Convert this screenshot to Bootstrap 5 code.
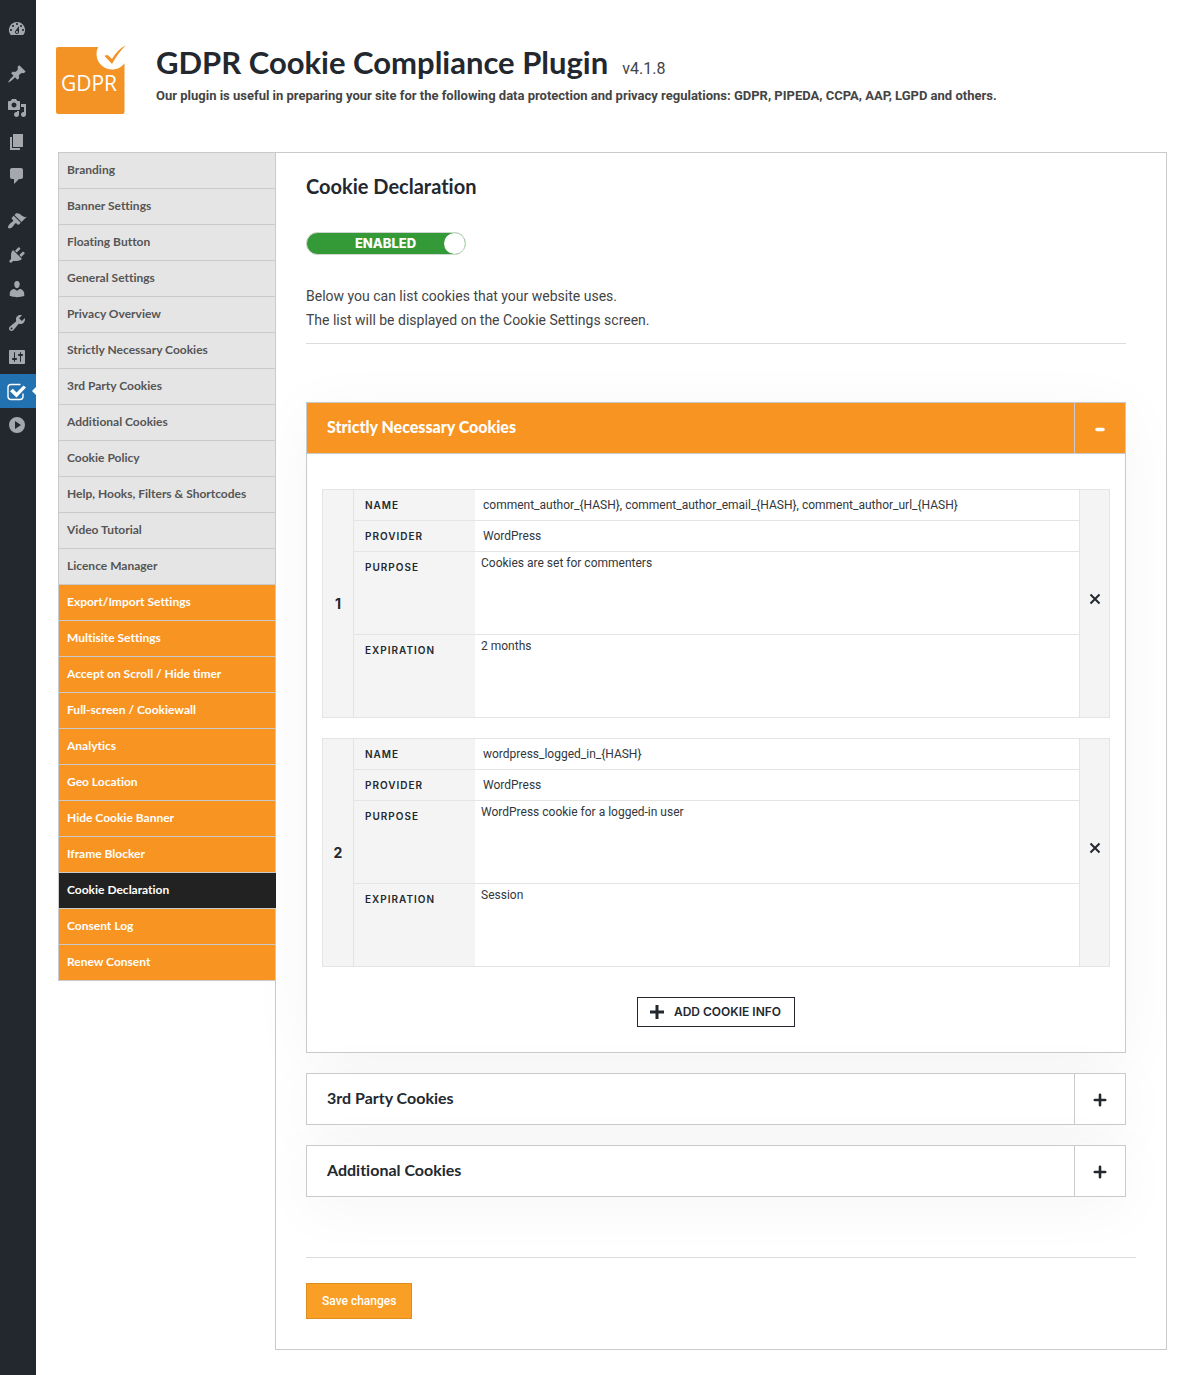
<!DOCTYPE html>
<html lang="en">
<head>
<meta charset="utf-8">
<meta name="viewport" content="width=device-width, initial-scale=1">
<title>GDPR Cookie Compliance Plugin</title>
<link rel="stylesheet" href="https://cdn.jsdelivr.net/npm/bootstrap@5.3.0/dist/css/bootstrap.min.css">
<style>
:root { --ink: #23282f; --brand: #f89422; --rule: #c9cacc; --soft: #e3e4e4; --tint: #f4f4f4; --title: Lato, "Noto Sans", sans-serif; --text: Roboto, "Liberation Sans", sans-serif; }
body { font: 14px/24px var(--text); color: #444; background: #fff; }
.rail { width: 36px; background: var(--ink); padding-top: 12px; }
.rail a { position: relative; height: 34px; padding-right: 2px; color: #a4a8ad; }
.rail a.gap-above { margin-top: 11px; }
.rail svg { width: 20px; height: 20px; fill: currentColor; }
.rail a.current { background: #2271b1; color: #fff; }
.rail a.current::after { content: ""; position: absolute; right: 0; top: 13px; border: solid transparent; border-width: 4px 4px 4px 0; border-right-color: #fff; }
.page-main { padding: 40px 20px 25px; }
.logo { width: 72px; height: 76px; }
.head-row { gap: 28px; min-height: 112px; }
.head-row h1 { font: 700 31px/45px var(--title); color: var(--ink); }
.version { font-size: 16px; margin-left: 14px; }
.tagline { font: 700 13px/21px var(--text); }
.split { margin-left: 2px; }
.side { width: 218px; margin-right: -1px; z-index: 1; border: 1px solid var(--rule); border-bottom: 0; }
.side a { height: 36px; padding: 0 8px; font: 700 12px/34px var(--title); border-bottom: 1px solid var(--rule); background: #e5e5e5; color: #555; }
.side a.premium { background: var(--brand); color: #fff; }
.side a.active { background: #222; color: #fff; margin-right: -1px; }
.panel { border: 1px solid var(--rule); padding: 20px 30px 30px; }
.panel h2 { font: 700 20px/27px var(--title); color: var(--ink); margin: 0 0 32px; }
.head-row h1, .side a, .panel h2, .panel .group-name { font-variant-ligatures: none; }
.toggle { position: relative; width: 160px; height: 23px; border: 1px solid #cfd6cf; border-radius: 12px; background: #349a37; color: #fff; font: 800 13px/21px Inter, sans-serif; cursor: pointer; }
.toggle input { opacity: 0; position: absolute; inset: 0; width: 100%; height: 100%; margin: 0; }
.toggle .caption-text { padding-left: 20px; }
.toggle .knob { width: 21px; height: 21px; border-radius: 50%; background: #fff; }
.intro { margin: 29px 10px 58px 0; padding-bottom: 11px; border-bottom: 1px solid #dcdcdc; }
.groups { margin-right: 10px; gap: 20px; }
.group-box { border: 1px solid var(--rule); background: #fff; box-shadow: 0 10px 60px rgba(0,0,0,.045); }
.group-head { height: 50px; color: var(--ink); background: none; border: 0; padding: 0; width: 100%; }
.group-name { font: 700 16px/48px var(--title); padding-left: 20px; }
.group-sign { width: 51px; border-left: 1px solid var(--rule); padding-top: 2px; }
.open .group-head { height: 51px; background: var(--brand); color: #fff; border-bottom: 1px solid var(--rule); }
.open .group-name { font-weight: 900; }
.group-body { padding: 35px 15px 25px; }
.entry { border: 1px solid var(--soft); margin-bottom: 20px; color: var(--ink); }
.entry .num { width: 31px; background: var(--tint); border-right: 1px solid var(--soft); font: 700 14px/24px Inter, sans-serif; }
.entry .drop { width: 30px; background: var(--tint); border: 0; border-left: 1px solid var(--soft); color: var(--ink); padding: 0 0 12px; }
.line { border-bottom: 1px solid var(--soft); height: 31px; }
.line.tall { height: 83px; }
.line.tall:last-child { border-bottom: 0; height: 82px; }
.line label { width: 121px; padding-left: 11px; background: var(--tint); font: 600 10px/31px Inter, sans-serif; letter-spacing: 1px; }
.line input, .line textarea { border: 0; outline: 0; background: #fff; color: #32373c; font: 12px/18px var(--text); padding: 0 8px; min-width: 0; resize: none; }
.line textarea { padding: 2px 6px; }
.add { height: 30px; margin-top: 30px; border: 1px solid var(--ink); background: #fff; color: var(--ink); font: 600 12px/28px Inter, sans-serif; padding: 0 13px 0 12px; gap: 10px; }
.final { border-top: 1px solid #dcdcdc; margin-top: 60px; padding-top: 25px; }
.save { height: 36px; padding: 0 15px; border: 1px solid #dd8e20; background: #f99f26; color: #fff; font: 500 12px/34px var(--text); }
</style>
</head>
<body>
<div class="d-flex align-items-stretch min-vh-100">
<nav class="rail flex-shrink-0 d-flex flex-column" aria-label="Admin">
<a href="#" class="d-flex align-items-center justify-content-center" aria-label="Dashboard"><svg viewBox="0 0 20 20"><path fill-rule="evenodd" d="M3.76 16h12.48A7.998 7.998 0 0 0 10 3a7.998 7.998 0 0 0-6.24 13zM10 4c.55 0 1 .45 1 1s-.45 1-1 1-1-.45-1-1 .45-1 1-1zM6 6c.55 0 1 .45 1 1s-.45 1-1 1-1-.45-1-1 .45-1 1-1zm8 0c.55 0 1 .45 1 1s-.45 1-1 1-1-.45-1-1 .45-1 1-1zm-5.37 5.55L12 7v6c0 1.1-.9 2-2 2s-2-.9-2-2c0-.57.24-1.08.63-1.45zM4 10c.55 0 1 .45 1 1s-.45 1-1 1-1-.45-1-1 .45-1 1-1zm12 0c.55 0 1 .45 1 1s-.45 1-1 1-1-.45-1-1 .45-1 1-1zm-5 3c0-.55-.45-1-1-1s-1 .45-1 1 .45 1 1 1 1-.45 1-1z"/></svg></a>
<a href="#" class="gap-above d-flex align-items-center justify-content-center" aria-label="Posts"><svg viewBox="0 0 20 20"><path d="M10.44 3.02l1.82-1.82 6.36 6.35-1.83 1.82c-1.05-.68-2.48-.57-3.41.36l-.75.75c-.92.93-1.04 2.35-.35 3.41l-1.83 1.82-2.41-2.41-2.8 2.79c-.42.42-3.38 2.71-3.8 2.29s1.86-3.39 2.28-3.81l2.79-2.79L4.1 9.36l1.83-1.82c1.05.69 2.48.57 3.4-.36l.75-.75c.93-.92 1.05-2.35.36-3.41z"/></svg></a>
<a href="#" class="d-flex align-items-center justify-content-center" aria-label="Media"><svg viewBox="0 0 20 20"><path fill-rule="evenodd" d="M13 11V4c0-.55-.45-1-1-1h-1.67L9 1H5L3.67 3H2c-.55 0-1 .45-1 1v7c0 .55.45 1 1 1h10c.55 0 1-.45 1-1zM7 4.5c1.38 0 2.5 1.12 2.5 2.5S8.38 9.5 7 9.5 4.5 8.38 4.5 7 5.62 4.5 7 4.5zM14 6h5v10.5c0 1.38-1.12 2.5-2.5 2.5S14 17.88 14 16.5s1.12-2.5 2.5-2.5c.17 0 .34.02.5.05V9h-3V6zm-4 8.05V13h2v3.5c0 1.38-1.12 2.5-2.5 2.5S7 17.88 7 16.5 8.12 14 9.5 14c.17 0 .34.02.5.05z"/></svg></a>
<a href="#" class="d-flex align-items-center justify-content-center" aria-label="Pages"><svg viewBox="0 0 20 20"><path d="M6 15V2h10v13H6zm-1 1h8v2H3V5h2v11z"/></svg></a>
<a href="#" class="d-flex align-items-center justify-content-center" aria-label="Comments"><svg viewBox="0 0 20 20"><path d="M5 2h9c1.1 0 2 .9 2 2v7c0 1.1-.9 2-2 2h-2l-5 5v-5H5c-1.1 0-2-.9-2-2V4c0-1.1.9-2 2-2z"/></svg></a>
<a href="#" class="gap-above d-flex align-items-center justify-content-center" aria-label="Appearance"><svg viewBox="0 0 20 20"><path d="M14.48 11.06L7.41 3.99l1.5-1.5c.5-.56 2.3-.47 3.51.32 1.21.8 1.43 1.28 2.91 2.1 1.18.64 2.45 1.26 4.45.85zm-.71.71L6.7 4.7 4.93 6.47c-.39.39-.39 1.02 0 1.41l1.06 1.06c.39.39.39 1.03 0 1.42-.6.6-1.43 1.11-2.21 1.69-.35.26-.7.53-1.01.84C1.43 14.23.4 16.08 1.4 17.07c.99 1 2.84-.03 4.18-1.36.31-.31.58-.66.85-1.02.57-.78 1.08-1.61 1.69-2.21.39-.39 1.02-.39 1.41 0l1.06 1.06c.39.39 1.02.39 1.41 0z"/></svg></a>
<a href="#" class="d-flex align-items-center justify-content-center" aria-label="Plugins"><svg viewBox="0 0 20 20"><path d="M13.11 4.36L9.87 7.6 8 5.73l3.24-3.24c.35-.34 1.05-.2 1.56.32.52.51.66 1.21.31 1.55zm-8 1.77l.91-1.12 9.01 9.01-1.19.84c-.71.71-2.63 1.16-3.82 1.16H6.14L4.9 17.26c-.59.59-1.54.59-2.12 0-.59-.58-.59-1.53 0-2.12l1.24-1.24v-3.88c0-1.13.4-3.19 1.09-3.89zm7.26 3.97l3.24-3.24c.34-.35 1.04-.21 1.55.31.52.51.66 1.21.31 1.55l-3.24 3.25z"/></svg></a>
<a href="#" class="d-flex align-items-center justify-content-center" aria-label="Users"><svg viewBox="0 0 20 20"><path d="M10 9.25c-2.27 0-2.73-3.44-2.73-3.44C7 4.02 7.82 2 9.97 2c2.16 0 2.98 2.02 2.71 3.81 0 0-.41 3.44-2.68 3.44zm0 2.57L12.72 10c2.39 0 4.52 2.33 4.52 4.53v2.49s-3.65 1.13-7.24 1.13c-3.65 0-7.24-1.13-7.24-1.13v-2.49c0-2.25 1.94-4.48 4.47-4.48z"/></svg></a>
<a href="#" class="d-flex align-items-center justify-content-center" aria-label="Tools"><svg viewBox="0 0 20 20"><path fill-rule="evenodd" d="M16.68 9.77c-1.34 1.34-3.3 1.67-4.95.99l-5.41 6.52c-.99.99-2.59.99-3.58 0s-.99-2.59 0-3.57l6.52-5.42c-.68-1.65-.35-3.61.99-4.95 1.28-1.28 3.12-1.62 4.72-1.06l-2.89 2.89 2.82 2.82 2.86-2.87c.53 1.58.18 3.39-1.08 4.65zM3.81 16.21c.4.39 1.04.39 1.43 0 .4-.4.4-1.04 0-1.43-.39-.4-1.03-.4-1.43 0-.39.39-.39 1.03 0 1.43z"/></svg></a>
<a href="#" class="d-flex align-items-center justify-content-center" aria-label="Settings"><svg viewBox="0 0 20 20"><path fill-rule="evenodd" d="M18 16V4c0-.55-.45-1-1-1H3c-.55 0-1 .45-1 1v12c0 .55.45 1 1 1h14c.55 0 1-.45 1-1zM8 11h1c.55 0 1 .45 1 1s-.45 1-1 1H8v1.5c0 .28-.22.5-.5.5s-.5-.22-.5-.5V13H6c-.55 0-1-.45-1-1s.45-1 1-1h1V5.5c0-.28.22-.5.5-.5s.5.22.5.5V11zm5-2h-1c-.55 0-1-.45-1-1s.45-1 1-1h1V5.5c0-.28.22-.5.5-.5s.5.22.5.5V7h1c.55 0 1 .45 1 1s-.45 1-1 1h-1v5.5c0 .28-.22.5-.5.5s-.5-.22-.5-.5V9z"/></svg></a>
<a href="#" class="current d-flex align-items-center justify-content-center" aria-label="GDPR Cookie"><svg viewBox="0 0 20 20"><path d="M13.500 3.500H4Q1 3.500 1 6.500v9q0 3 3 3h9q3 0 3-3v-3" fill="none" stroke="currentColor" stroke-width="1.400"/><path d="M3 10.200l2.800-2.400 3.700 3.700 7-7 2.500 2L9.500 16.500z"/></svg></a>
<a href="#" class="d-flex align-items-center justify-content-center" aria-label="Collapse menu"><svg viewBox="0 0 20 20"><path fill-rule="evenodd" d="M10 2a8 8 0 1 0 0 16 8 8 0 0 0 0-16zM8 6l6 4-6 4z"/></svg></a>
</nav>
<main class="page-main flex-grow-1">
<header class="head-row d-flex align-items-start">
<svg class="logo flex-shrink-0" viewBox="0 0 72 76" role="img" aria-label="GDPR logo">
<path fill="#f39325" d="M2 7H42.200A15.500 15.500 0 0 0 68.500 23.200V72a2 2 0 0 1-2 2H2a2 2 0 0 1-2-2V9a2 2 0 0 1 2-2z"/>
<path fill="#f39325" d="M48.300 15.700L51.800 15 56 19Q61 10 70 5 62 13 56 24z"/>
<text x="33" y="51" text-anchor="middle" font-family="Open Sans" font-size="21" fill="#fff">GDPR</text>
</svg>
<div>
<div class="d-flex align-items-baseline"><h1 class="m-0">GDPR Cookie Compliance Plugin</h1><span class="version">v4.1.8</span></div>
<p class="tagline m-0">Our plugin is useful in preparing your site for the following data protection and privacy regulations: GDPR, PIPEDA, CCPA, AAP, LGPD and others.</p>
</div>
</header>
<div class="split d-flex align-items-start">
<nav class="side nav flex-column flex-nowrap flex-shrink-0" aria-label="Plugin settings">
<a href="#" class="nav-link">Branding</a>
<a href="#" class="nav-link">Banner Settings</a>
<a href="#" class="nav-link">Floating Button</a>
<a href="#" class="nav-link">General Settings</a>
<a href="#" class="nav-link">Privacy Overview</a>
<a href="#" class="nav-link">Strictly Necessary Cookies</a>
<a href="#" class="nav-link">3rd Party Cookies</a>
<a href="#" class="nav-link">Additional Cookies</a>
<a href="#" class="nav-link">Cookie Policy</a>
<a href="#" class="nav-link">Help, Hooks, Filters &amp; Shortcodes</a>
<a href="#" class="nav-link">Video Tutorial</a>
<a href="#" class="nav-link">Licence Manager</a>
<a href="#" class="nav-link premium">Export/Import Settings</a>
<a href="#" class="nav-link premium">Multisite Settings</a>
<a href="#" class="nav-link premium">Accept on Scroll / Hide timer</a>
<a href="#" class="nav-link premium">Full-screen / Cookiewall</a>
<a href="#" class="nav-link premium">Analytics</a>
<a href="#" class="nav-link premium">Geo Location</a>
<a href="#" class="nav-link premium">Hide Cookie Banner</a>
<a href="#" class="nav-link premium">Iframe Blocker</a>
<a href="#" class="nav-link active" aria-current="page">Cookie Declaration</a>
<a href="#" class="nav-link premium">Consent Log</a>
<a href="#" class="nav-link premium">Renew Consent</a>
</nav>
<section class="panel flex-grow-1">
<h2>Cookie Declaration</h2>
<label class="toggle d-flex align-items-center"><input type="checkbox" role="switch" checked><span class="caption-text flex-grow-1 text-center">ENABLED</span><span class="knob"></span></label>
<div class="intro"><p class="m-0">Below you can list cookies that your website uses.</p><p class="m-0">The list will be displayed on the Cookie Settings screen.</p></div>
<div class="groups d-flex flex-column">
<div class="group-box open">
<button type="button" class="group-head d-flex text-start" aria-expanded="true"><span class="group-name flex-grow-1">Strictly Necessary Cookies</span><span class="group-sign align-self-stretch d-flex align-items-center justify-content-center"><svg width="14" height="14" viewBox="0 0 14 14"><path d="M4 7.500h6" stroke="currentColor" stroke-width="3.500" stroke-linecap="round"/></svg></span></button>
<div class="group-body">
<div class="entry d-flex">
<div class="num d-flex align-items-center justify-content-center">1</div>
<div class="flex-grow-1">
<div class="line d-flex"><label for="n1">NAME</label><input id="n1" class="flex-grow-1" value="comment_author_{HASH}, comment_author_email_{HASH}, comment_author_url_{HASH}"></div>
<div class="line d-flex"><label for="p1">PROVIDER</label><input id="p1" class="flex-grow-1" value="WordPress"></div>
<div class="line tall d-flex"><label for="u1">PURPOSE</label><textarea id="u1" class="flex-grow-1">Cookies are set for commenters</textarea></div>
<div class="line tall d-flex"><label for="e1">EXPIRATION</label><textarea id="e1" class="flex-grow-1">2 months</textarea></div>
</div>
<button type="button" class="drop" aria-label="Remove cookie 1"><svg width="12" height="12" viewBox="0 0 12 12"><path d="M1.500 1.500l9 9M10.500 1.500l-9 9" stroke="currentColor" stroke-width="2"/></svg></button>
</div>
<div class="entry d-flex">
<div class="num d-flex align-items-center justify-content-center">2</div>
<div class="flex-grow-1">
<div class="line d-flex"><label for="n2">NAME</label><input id="n2" class="flex-grow-1" value="wordpress_logged_in_{HASH}"></div>
<div class="line d-flex"><label for="p2">PROVIDER</label><input id="p2" class="flex-grow-1" value="WordPress"></div>
<div class="line tall d-flex"><label for="u2">PURPOSE</label><textarea id="u2" class="flex-grow-1">WordPress cookie for a logged-in user</textarea></div>
<div class="line tall d-flex"><label for="e2">EXPIRATION</label><textarea id="e2" class="flex-grow-1">Session</textarea></div>
</div>
<button type="button" class="drop" aria-label="Remove cookie 2"><svg width="12" height="12" viewBox="0 0 12 12"><path d="M1.500 1.500l9 9M10.500 1.500l-9 9" stroke="currentColor" stroke-width="2"/></svg></button>
</div>
<button type="button" class="add d-flex align-items-center mx-auto"><svg width="14" height="14" viewBox="0 0 14 14"><path d="M7 0v14M0 7h14" stroke="currentColor" stroke-width="3"/></svg>ADD COOKIE INFO</button>
</div>
</div>
<div class="group-box"><button type="button" class="group-head d-flex text-start" aria-expanded="false"><span class="group-name flex-grow-1">3rd Party Cookies</span><span class="group-sign align-self-stretch d-flex align-items-center justify-content-center"><svg width="14" height="14" viewBox="0 0 14 14"><path d="M7 1.800v10.400M1.800 7h10.400" stroke="currentColor" stroke-width="2.600" stroke-linecap="round"/></svg></span></button></div>
<div class="group-box"><button type="button" class="group-head d-flex text-start" aria-expanded="false"><span class="group-name flex-grow-1">Additional Cookies</span><span class="group-sign align-self-stretch d-flex align-items-center justify-content-center"><svg width="14" height="14" viewBox="0 0 14 14"><path d="M7 1.800v10.400M1.800 7h10.400" stroke="currentColor" stroke-width="2.600" stroke-linecap="round"/></svg></span></button></div>
</div>
<div class="final"><button type="button" class="save">Save changes</button></div>
</section>
</div>
</main>
</div>
<script src="https://cdn.jsdelivr.net/npm/bootstrap@5.3.0/dist/js/bootstrap.bundle.min.js"></script>
</body>
</html>
